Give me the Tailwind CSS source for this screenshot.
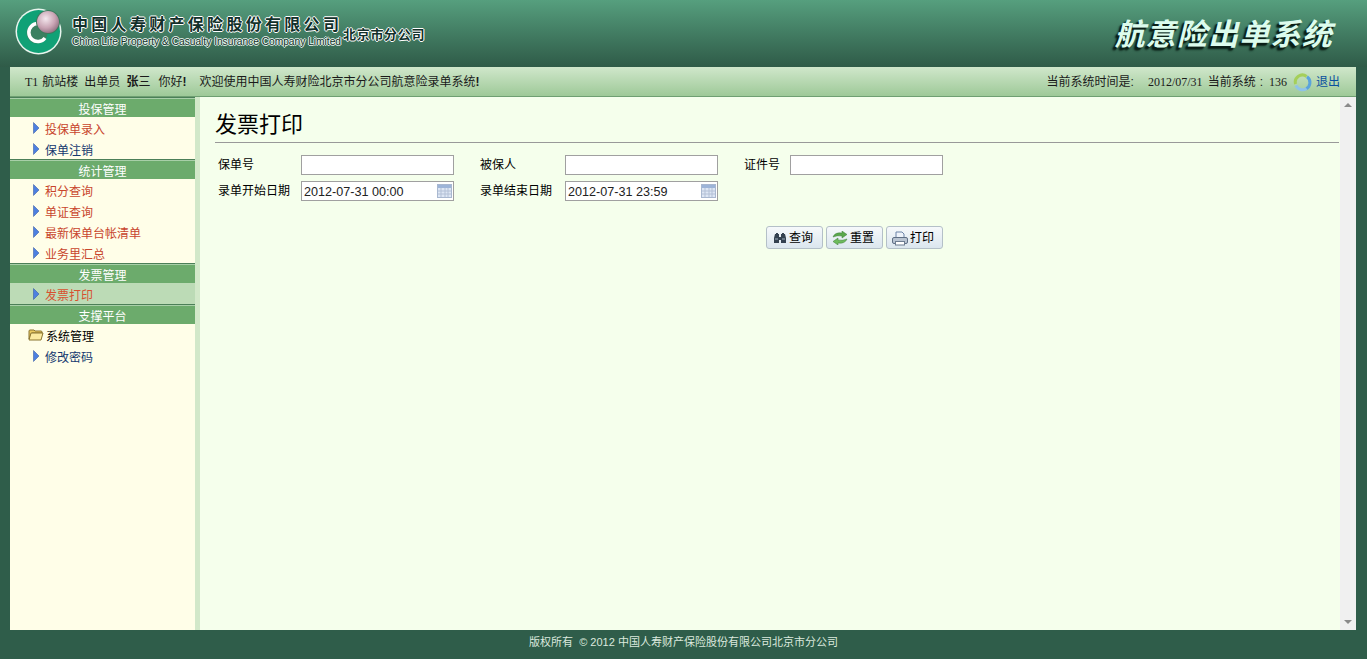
<!DOCTYPE html>
<html lang="zh-CN">
<head>
    <meta charset="UTF-8">
    <title>发票打印</title>
    <script src="https://cdn.jsdelivr.net/npm/@tailwindcss/browser@4"></script>
</head>
<body class="h-[659px] w-[1367px] overflow-hidden bg-[#2f5d4a] text-[12px] text-black font-['Liberation_Sans','Noto_Sans_CJK_SC',sans-serif]">

    <!-- header -->
    <div class="h-[67px] flex bg-gradient-to-b from-[#569f7e] to-[#2f5b48]">
        <svg class="ml-[15px] mt-[8px] w-[50px] h-[48px]" viewBox="0 0 50 48">
            <defs>
                <radialGradient id="ball" cx="0.4" cy="0.35" r="0.7">
                    <stop offset="0" stop-color="#f4e8ee"/>
                    <stop offset="0.6" stop-color="#c9a4b4"/>
                    <stop offset="1" stop-color="#8f6f80"/>
                </radialGradient>
            </defs>
            <circle cx="23.500" cy="23.500" r="23" fill="#e8f5ee"/>
            <circle cx="23.500" cy="23.500" r="21.500" fill="#10a176"/>
            <circle cx="22" cy="25" r="10.500" fill="#3a8060"/>
            <path d="M29.500 18.500A9 9 0 1 0 30 30" fill="none" stroke="#fff" stroke-width="3.500"/>
            <circle cx="33" cy="14" r="12" fill="#3a7a5c"/>
            <circle cx="33" cy="14" r="11" fill="url(#ball)"/>
        </svg>
        <div class="ml-[7px] mt-[16px] w-[271px]">
            <div class="h-[18px] leading-[18px] text-[16px] font-bold tracking-[3.3px] whitespace-nowrap text-[#12302a] [text-shadow:1px_0_0_#fff,-1px_0_0_#fff,0_1px_0_#fff,0_-1px_0_#fff]">中国人寿财产保险股份有限公司</div>
            <div class="mt-[1px] text-[10.2px] leading-[14px] whitespace-nowrap text-[#12302a] [text-shadow:1px_0_0_#e8f5ee,-1px_0_0_#e8f5ee,0_1px_0_#e8f5ee,0_-1px_0_#e8f5ee]">China Life Property &amp; Casualty Insurance Company Limited</div>
        </div>
        <div class="mt-[27px] h-[16px] leading-[16px] text-[13px] font-bold tracking-[0.7px] whitespace-nowrap text-[#12302a] [text-shadow:1px_0_0_#fff,-1px_0_0_#fff,0_1px_0_#fff,0_-1px_0_#fff]">北京市分公司</div>
        <div class="ml-auto mr-[34px] mt-[16px] h-[38px] leading-[38px] text-[30px] font-bold italic tracking-[1.2px] text-[#dcfced] [text-shadow:-2px_2px_1px_#0b1f17,-3px_3px_2px_#0b1f17]">航意险出单系统</div>
    </div>

    <div class="mx-[10px] mr-[11px]">
        <!-- top bar -->
        <div class="h-[30px] flex items-center pt-[1px] leading-[28px] whitespace-nowrap bg-gradient-to-b from-[#d0e7cb] to-[#9ec998] border-b border-[#6f9f72] text-[#1a1a1a]">
            <span class="ml-[15px] font-['Liberation_Serif','Noto_Sans_CJK_SC',serif]">T1</span>
            <span class="ml-[4px]">航站楼</span>
            <span class="ml-[6px]">出单员</span>
            <span class="ml-[6px] font-bold">张</span><span>三</span>
            <span class="ml-[8px]">你好<b>!</b></span>
            <span class="ml-[13px]">欢迎使用中国人寿财险北京市分公司航意险录单系统<b>!</b></span>
            <span class="ml-auto">当前系统时间是:</span>
            <span class="ml-[14px] font-['Liberation_Serif',serif]">2012/07/31</span>
            <span class="ml-[5px]">当前系统<span class="ml-[4px]">:</span></span>
            <span class="ml-[6px] font-['Liberation_Serif',serif]">136</span>
            <svg class="ml-[6px] w-[19px] h-[19px]" viewBox="0 0 19 19" fill="none" stroke-width="3">
                <path d="M2.600 11a7 7 0 0 1 11-7.500" stroke="#a5cf5a"/>
                <path d="M14 3.800a7 7 0 0 1-1 12" stroke="#5aa3dc"/>
                <path d="M13.500 15.500a7 7 0 0 1-10.500-3" stroke="#8fc3e8"/>
            </svg>
            <span class="ml-[4px] mr-[16px] text-[#0b4f9e]">退出</span>
        </div>

        <div class="h-[533px] flex">
            <!-- sidebar -->
            <div class="w-[185px] bg-[#fffee8]">
                <div class="h-[20px] pt-[3px] leading-[18px] text-center text-white bg-[#6cab6c] border-t border-[#4c7f58] shadow-[inset_0_1px_0_#a8cfa8]">投保管理</div>
                <a class="h-[21px] flex pl-[22px] pt-[5px] leading-[16px] text-[#c8452c]"><svg class="-mt-[1px] w-[8px] h-[14px] mr-[5px]" viewBox="0 0 8 14"><path d="M1.500 1.500l5.500 5.500-5.500 5.500z" fill="#4d80e0" stroke="#2a4f9c" stroke-width="0.500"/></svg>投保单录入</a>
                <a class="h-[21px] flex pl-[22px] pt-[5px] leading-[16px] text-[#14386f]"><svg class="-mt-[1px] w-[8px] h-[14px] mr-[5px]" viewBox="0 0 8 14"><path d="M1.500 1.500l5.500 5.500-5.500 5.500z" fill="#4d80e0" stroke="#2a4f9c" stroke-width="0.500"/></svg>保单注销</a>
                <div class="h-[20px] pt-[3px] leading-[18px] text-center text-white bg-[#6cab6c] border-t border-[#4c7f58] shadow-[inset_0_1px_0_#a8cfa8]">统计管理</div>
                <a class="h-[21px] flex pl-[22px] pt-[5px] leading-[16px] text-[#c8452c]"><svg class="-mt-[1px] w-[8px] h-[14px] mr-[5px]" viewBox="0 0 8 14"><path d="M1.500 1.500l5.500 5.500-5.500 5.500z" fill="#4d80e0" stroke="#2a4f9c" stroke-width="0.500"/></svg>积分查询</a>
                <a class="h-[21px] flex pl-[22px] pt-[5px] leading-[16px] text-[#c8452c]"><svg class="-mt-[1px] w-[8px] h-[14px] mr-[5px]" viewBox="0 0 8 14"><path d="M1.500 1.500l5.500 5.500-5.500 5.500z" fill="#4d80e0" stroke="#2a4f9c" stroke-width="0.500"/></svg>单证查询</a>
                <a class="h-[21px] flex pl-[22px] pt-[5px] leading-[16px] text-[#c8452c]"><svg class="-mt-[1px] w-[8px] h-[14px] mr-[5px]" viewBox="0 0 8 14"><path d="M1.500 1.500l5.500 5.500-5.500 5.500z" fill="#4d80e0" stroke="#2a4f9c" stroke-width="0.500"/></svg>最新保单台帐清单</a>
                <a class="h-[21px] flex pl-[22px] pt-[5px] leading-[16px] text-[#c8452c]"><svg class="-mt-[1px] w-[8px] h-[14px] mr-[5px]" viewBox="0 0 8 14"><path d="M1.500 1.500l5.500 5.500-5.500 5.500z" fill="#4d80e0" stroke="#2a4f9c" stroke-width="0.500"/></svg>业务里汇总</a>
                <div class="h-[20px] pt-[3px] leading-[18px] text-center text-white bg-[#6cab6c] border-t border-[#4c7f58] shadow-[inset_0_1px_0_#a8cfa8]">发票管理</div>
                <a class="h-[21px] flex pl-[22px] pt-[5px] leading-[16px] text-[#d8502f] bg-[#bcdbb6]"><svg class="-mt-[1px] w-[8px] h-[14px] mr-[5px]" viewBox="0 0 8 14"><path d="M1.500 1.500l5.500 5.500-5.500 5.500z" fill="#4d80e0" stroke="#2a4f9c" stroke-width="0.500"/></svg>发票打印</a>
                <div class="h-[20px] pt-[3px] leading-[18px] text-center text-white bg-[#6cab6c] border-t border-[#4c7f58] shadow-[inset_0_1px_0_#a8cfa8]">支撑平台</div>
                <div class="h-[21px] flex pl-[18px] pt-[5px] leading-[16px]">
                    <svg class="-mt-[1px] w-[16px] h-[14px] mr-[2px]" viewBox="0 0 16 14"><path d="M1 11V3q0-1 1-1h4l1 1h6q1 0 1 1v1H4z" fill="#e8c860" stroke="#8a7430"/><path d="M1 12l2-7h12l-2 7z" fill="#fbeaa0" stroke="#8a7430"/></svg>系统管理
                </div>
                <a class="h-[21px] flex pl-[22px] pt-[5px] leading-[16px] text-[#14386f]"><svg class="-mt-[1px] w-[8px] h-[14px] mr-[5px]" viewBox="0 0 8 14"><path d="M1.500 1.500l5.500 5.500-5.500 5.500z" fill="#4d80e0" stroke="#2a4f9c" stroke-width="0.500"/></svg>修改密码</a>
            </div>
            <div class="w-[5px] bg-[#d2e8c9]"></div>

            <!-- content -->
            <div class="flex-1 pl-[15px] pr-[1px] bg-[#f5ffec]">
                <h1 class="h-[46px] pt-[13px] leading-[30px] text-[22px] border-b border-[#999]">发票打印</h1>
                <div class="pl-[3px] pt-[12px]">
                    <div class="h-[20px] flex items-center">
                        <label class="w-[83px]">保单号</label>
                        <input class="w-[153px] h-[20px] bg-white border border-[#a0a0a0]">
                        <label class="ml-[26px] w-[85px]">被保人</label>
                        <input class="w-[153px] h-[20px] bg-white border border-[#a0a0a0]">
                        <label class="ml-[26px] w-[46px]">证件号</label>
                        <input class="w-[153px] h-[20px] bg-white border border-[#a0a0a0]">
                    </div>
                    <div class="mt-[6px] h-[20px] flex items-center">
                        <label class="w-[83px]">录单开始日期</label>
                        <div class="w-[153px] h-[20px] flex items-center pl-[2px] pr-[1px] bg-white border border-[#a0a0a0]">
                            <span class="flex-1 pt-[3px] text-[12.6px] text-[#222]">2012-07-31 00:00</span>
                            <svg class="w-[15px] h-[14px]" viewBox="0 0 15 14"><rect x="0.500" y="0.500" width="14" height="13" fill="#dde6f4" stroke="#a9b8d0"/><rect x="1" y="1" width="13" height="3" fill="#9db4d8"/><path d="M1 7h13M1 10h13M4 4v9M8 4v9M11 4v9" stroke="#b3c0d6"/></svg>
                        </div>
                        <label class="ml-[26px] w-[85px]">录单结束日期</label>
                        <div class="w-[153px] h-[20px] flex items-center pl-[2px] pr-[1px] bg-white border border-[#a0a0a0]">
                            <span class="flex-1 pt-[3px] text-[12.6px] text-[#222]">2012-07-31 23:59</span>
                            <svg class="w-[15px] h-[14px]" viewBox="0 0 15 14"><rect x="0.500" y="0.500" width="14" height="13" fill="#dde6f4" stroke="#a9b8d0"/><rect x="1" y="1" width="13" height="3" fill="#9db4d8"/><path d="M1 7h13M1 10h13M4 4v9M8 4v9M11 4v9" stroke="#b3c0d6"/></svg>
                        </div>
                    </div>
                    <!-- buttons end at the right edge of the third input -->
                    <div class="mt-[25px] w-[725px] flex justify-end gap-[3px]">
                        <button class="w-[57px] h-[23px] flex items-center pl-[6px] pt-[1px] gap-[2px] rounded-[3px] border border-[#b4c0c8] bg-gradient-to-b from-[#f6f9fb] to-[#dbe6ee]">
                            <svg class="w-[14px] h-[12px]" viewBox="0 0 14 12"><path d="M1 6l1-4h1V1h2v1h1v3h2V2h1V1h2v1h1l1 4v5H8V8H6v3H1z" fill="#33414f"/><path d="M2 7h3M9 7h3" stroke="#9fb0bf"/></svg>查询
                        </button>
                        <button class="w-[57px] h-[23px] flex items-center pl-[5px] pt-[1px] gap-[2px] rounded-[3px] border border-[#b4c0c8] bg-gradient-to-b from-[#f6f9fb] to-[#dbe6ee]">
                            <svg class="w-[16px] h-[14px]" viewBox="0 0 16 14"><path d="M1 6q2-5 9-4V0l5 3.500L10 7V5Q6 4 1 6z" fill="#5aa84c" stroke="#3f7d38" stroke-width="0.500"/><path d="M15 8q-2 5-9 4v2L1 10.500 6 7v2q4 1 9-1z" fill="#6dbb5c" stroke="#3f7d38" stroke-width="0.500"/></svg>重置
                        </button>
                        <button class="w-[57px] h-[23px] flex items-center pl-[5px] pt-[1px] gap-[2px] rounded-[3px] border border-[#b4c0c8] bg-gradient-to-b from-[#f6f9fb] to-[#dbe6ee]">
                            <svg class="w-[16px] h-[15px]" viewBox="0 0 16 15"><path d="M4 7V1h6l2 2v4" fill="#eef3fa" stroke="#6d84a8"/><rect x="0.500" y="6.500" width="15" height="6" rx="1.500" fill="#b9c4d2" stroke="#5f6f85"/><rect x="3.500" y="10.500" width="9" height="3.500" fill="#fff" stroke="#6d7c90"/></svg>打印
                        </button>
                    </div>
                </div>
            </div>

            <!-- scrollbar -->
            <div class="w-[16px] flex flex-col justify-between py-[6px] items-center bg-[#f0f0f0]">
                <div class="w-0 h-0 border-x-[4px] border-x-transparent border-b-[4px] border-b-[#8a8a8a]"></div>
                <div class="w-0 h-0 border-x-[4px] border-x-transparent border-t-[4px] border-t-[#8a8a8a]"></div>
            </div>
        </div>
    </div>

    <!-- footer -->
    <div class="h-[29px] pt-[3px] leading-[18px] text-center text-[11px] text-[#dce9de]">版权所有 &nbsp;© 2012 中国人寿财产保险股份有限公司北京市分公司</div>
</body>
</html>
